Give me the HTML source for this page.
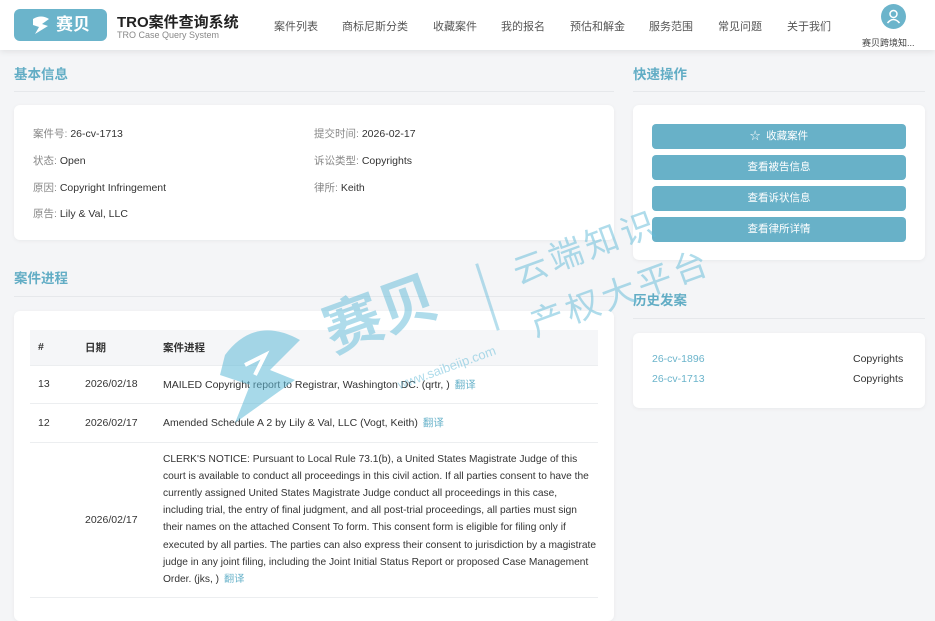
<!DOCTYPE html>
<html><head><meta charset="utf-8"><style>
*{margin:0;padding:0;box-sizing:border-box}
body{width:935px;height:608px;overflow:hidden;background:#f4f5f7;font-family:"Liberation Sans","Noto Sans CJK SC",sans-serif;color:#333;position:relative;font-size:11px}
.hdr{position:absolute;left:0;top:0;width:935px;height:50px;background:#fff;box-shadow:0 2px 6px rgba(0,0,0,.08);z-index:2}
.logo{position:absolute;left:14px;top:9px;width:93px;height:32px;background:#6bb4cb;border-radius:6px;color:#fff;font-weight:bold;font-size:17px;line-height:32px;padding-left:42px}
.logo svg{position:absolute;left:16px;top:6px}
.title{position:absolute;left:117px;top:11px;font-size:15px;font-weight:bold;color:#222}
.sub{position:absolute;left:117px;top:30px;font-size:9px;color:#888}
.nav{position:absolute;top:18px;font-size:11px;color:#555}
.av{position:absolute;left:881px;top:4px;width:25px;height:25px;border-radius:50%;background:#6bb4cb}
.avt{position:absolute;left:862px;top:36px;font-size:9px;color:#444}
.st{position:absolute;font-size:13.5px;font-weight:bold;color:#62adc5}
.ln{position:absolute;height:1px;background:#e6e8eb}
.card{position:absolute;background:#fff;border-radius:6px;box-shadow:0 1px 4px rgba(0,0,0,.05)}
.f{position:absolute;font-size:10.5px;color:#333}
.f span{color:#888}
.btn{position:absolute;left:652px;width:254px;height:25px;background:#68b1c8;border-radius:4px;color:#fff;text-align:center;line-height:25px;font-size:10.5px}
table{position:absolute;left:30px;top:330px;width:568px;border-collapse:collapse;font-size:10.5px}
td,th{text-align:left;border-bottom:1px solid #eceef0;vertical-align:middle}
th{background:#f5f6f8;height:35px;font-weight:bold}
.tr{color:#6bb4cb;margin-left:5px}
.wm{position:absolute;color:rgba(95,185,215,.5);font-weight:bold;z-index:3;pointer-events:none}
</style></head><body>
<div class="hdr">
<div class="logo"><svg width="22" height="20" viewBox="0 0 22 20"><path d="M3 4 Q11 -1 19 4 L12 9 L18 11 L5 19 L9 12 L3 10Z" fill="#fff"/></svg>赛贝</div>
<div class="title">TRO案件查询系统</div>
<div class="sub">TRO Case Query System</div>
<div class="nav" style="left:274px">案件列表</div>
<div class="nav" style="left:342px">商标尼斯分类</div>
<div class="nav" style="left:433px">收藏案件</div>
<div class="nav" style="left:501px">我的报名</div>
<div class="nav" style="left:570px">预估和解金</div>
<div class="nav" style="left:649px">服务范围</div>
<div class="nav" style="left:718px">常见问题</div>
<div class="nav" style="left:787px">关于我们</div>
<div class="av"><svg width="25" height="25" viewBox="0 0 25 25"><circle cx="12.5" cy="10" r="3.5" fill="none" stroke="#fff" stroke-width="1.5"/><path d="M6.5 19 Q12.5 12 18.5 19" fill="none" stroke="#fff" stroke-width="1.5"/></svg></div>
<div class="avt">赛贝跨境知...</div>
</div>

<div class="st" style="left:14px;top:63px">基本信息</div>
<div class="ln" style="left:14px;top:91px;width:600px"></div>
<div class="card" style="left:14px;top:105px;width:600px;height:135px"></div>
<div class="f" style="left:33px;top:126px"><span>案件号: </span>26-cv-1713</div>
<div class="f" style="left:314px;top:126px"><span>提交时间: </span>2026-02-17</div>
<div class="f" style="left:33px;top:153px"><span>状态: </span>Open</div>
<div class="f" style="left:314px;top:153px"><span>诉讼类型: </span>Copyrights</div>
<div class="f" style="left:33px;top:180px"><span>原因: </span>Copyright Infringement</div>
<div class="f" style="left:314px;top:180px"><span>律所: </span>Keith</div>
<div class="f" style="left:33px;top:206px"><span>原告: </span>Lily &amp; Val, LLC</div>

<div class="st" style="left:633px;top:63px">快速操作</div>
<div class="ln" style="left:633px;top:91px;width:292px"></div>
<div class="card" style="left:633px;top:105px;width:292px;height:155px"></div>
<div class="btn" style="top:124px">☆&nbsp; 收藏案件</div>
<div class="btn" style="top:155px">查看被告信息</div>
<div class="btn" style="top:186px">查看诉状信息</div>
<div class="btn" style="top:217px">查看律所详情</div>

<div class="st" style="left:633px;top:289px">历史发案</div>
<div class="ln" style="left:633px;top:318px;width:292px"></div>
<div class="card" style="left:633px;top:333px;width:292px;height:75px"></div>
<div class="f" style="left:652px;top:353px;color:#6bb4cb">26-cv-1896</div>
<div class="f" style="left:853px;top:353px">Copyrights</div>
<div class="f" style="left:652px;top:373px;color:#6bb4cb">26-cv-1713</div>
<div class="f" style="left:853px;top:373px">Copyrights</div>

<div class="st" style="left:14px;top:267px">案件进程</div>
<div class="ln" style="left:14px;top:296px;width:600px"></div>
<div class="card" style="left:14px;top:311px;width:600px;height:310px"></div>
<table>
<tr><th style="width:55px;padding-left:8px">#</th><th style="width:78px">日期</th><th>案件进程</th></tr>
<tr style="height:38px"><td style="padding-left:8px">13</td><td>2026/02/18</td><td>MAILED Copyright report to Registrar, Washington DC. (qrtr, )<span class="tr">翻译</span></td></tr>
<tr style="height:39px"><td style="padding-left:8px">12</td><td>2026/02/17</td><td>Amended Schedule A 2 by Lily &amp; Val, LLC (Vogt, Keith)<span class="tr">翻译</span></td></tr>
<tr><td></td><td>2026/02/17</td><td style="line-height:17.2px;padding:8px 0 9px;font-size:10.2px">CLERK'S NOTICE: Pursuant to Local Rule 73.1(b), a United States Magistrate Judge of this court is available to conduct all proceedings in this civil action. If all parties consent to have the currently assigned United States Magistrate Judge conduct all proceedings in this case, including trial, the entry of final judgment, and all post-trial proceedings, all parties must sign their names on the attached Consent To form. This consent form is eligible for filing only if executed by all parties. The parties can also express their consent to jurisdiction by a magistrate judge in any joint filing, including the Joint Initial Status Report or proposed Case Management Order. (jks, )<span class="tr">翻译</span></td></tr>
</table>

<svg class="wm" style="left:215px;top:315px" width="90" height="110" viewBox="0 0 90 110"><path d="M10 40 Q40 0 85 25 L55 55 L80 65 L20 108 L35 70 L5 60Z" fill="rgba(95,185,215,.55)"/><path d="M30 50 L50 40 L40 60" fill="none" stroke="#fff" stroke-width="4"/></svg>
<div class="wm" style="left:310px;top:290px;font-size:58px;transform:rotate(-20deg);transform-origin:left top">赛贝</div>
<div class="wm" style="left:395px;top:360px;font-size:13px;font-weight:normal;transform:rotate(-20deg)">www.saibeiip.com</div>
<div class="wm" style="left:486px;top:262px;width:3px;height:70px;background:rgba(95,185,215,.45);transform:rotate(-18deg)"></div>
<div class="wm" style="left:505px;top:248px;font-size:34px;font-weight:normal;letter-spacing:4px;transform:rotate(-20deg);transform-origin:left top">云端知识</div>
<div class="wm" style="left:522px;top:300px;font-size:34px;font-weight:normal;letter-spacing:4px;transform:rotate(-20deg);transform-origin:left top">产权大平台</div>
</body></html>
